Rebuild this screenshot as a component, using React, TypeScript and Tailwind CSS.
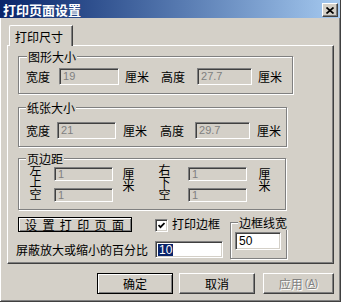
import type { ReactNode } from 'react'

// win98 bevels
const raised =
  'border-t border-l border-r border-b border-t-white border-l-white border-r-[#404040] border-b-[#404040] shadow-[inset_-1px_-1px_0_#808080]'
const defaultBtn = 'border border-black shadow-[inset_1px_1px_0_#fff,inset_-1px_-1px_0_#808080]'
const sunken =
  'border border-t-[#808080] border-l-[#808080] border-r-white border-b-white shadow-[inset_1px_1px_0_#404040,inset_-1px_-1px_0_#d4d0c8]'

function Group({ label, className, labelClass, children }: { label: string; className: string; labelClass: string; children?: ReactNode }) {
  return (
    <div className={`relative border border-[#808080] shadow-[inset_1px_1px_0_#fff,1px_1px_0_#fff] ${className}`}>
      <span className={`absolute -top-[7px] px-[1px] whitespace-nowrap leading-[14px] bg-[#d4d0c8] ${labelClass}`}>{label}</span>
      {children}
    </div>
  )
}

function Field({ value, className, enabled }: { value: string; className: string; enabled?: boolean }) {
  return (
    <div
      className={`flex items-center pl-[3px] font-['Liberation_Sans',sans-serif] text-[11px] leading-[11px] ${sunken} ${
        enabled ? 'bg-white text-black' : 'bg-[#d4d0c8] text-[#808080]'
      } ${className}`}
    >
      {value}
    </div>
  )
}

// stacked label, one glyph under the other
function Vertical({ text, className }: { text: string; className: string }) {
  return <div className={`w-[12px] leading-[12px] [writing-mode:vertical-rl] ${className}`}>{text}</div>
}

export default function App() {
  return (
    <div className="w-[341px] h-[302px] overflow-hidden bg-[#d4d0c8] border-r border-b border-r-[#404040] border-b-[#404040] shadow-[inset_1px_0_0_#fff,inset_-1px_-1px_0_#808080] text-[12px] leading-[12px] text-black font-['Noto_Sans_CJK_SC',sans-serif]">
      {/* Title bar */}
      <div className="h-[18px] flex items-start justify-between pl-[3px] pr-[2px] bg-linear-to-r from-[#0a246a] to-[#a6caf0]">
        <span className="mt-[3px] text-white font-bold text-[13px] leading-[13px]">打印页面设置</span>
        <div className={`mt-[3px] w-[16px] h-[14px] flex items-center justify-center bg-[#d4d0c8] ${raised}`}>
          <svg width="8" height="7" viewBox="0 0 8 7">
            <path d="M0.5 0.5 L7.5 6.5 M7.5 0.5 L0.5 6.5" stroke="#000" strokeWidth="1.7" fill="none" />
          </svg>
        </div>
      </div>

      <div className="pl-[7px] pt-[7px]">
        {/* Tab */}
        <div className="relative z-10 ml-[2px] -mb-[1px] w-[64px] h-[21px] bg-[#d4d0c8] border-t border-l border-r border-t-white border-l-white border-r-[#404040] shadow-[inset_-1px_0_0_#808080] rounded-tl-[2px] pl-[5px] pt-[5px]">
          打印尺寸
        </div>

        {/* Tab page */}
        <div className="w-[327px] h-[219px] border-t border-l border-r border-b border-t-white border-l-white border-r-[#404040] border-b-[#404040] shadow-[inset_-1px_-1px_0_#808080] pl-[8px]">
          <Group label="图形大小" labelClass="left-[8px]" className="ml-[2px] mt-[10px] w-[275px] h-[38px] pt-[11px] pl-[7px]">
            <div className="flex items-center h-[17px]">
              <span>宽度</span>
              <Field value="19" className="ml-[9px] w-[60px] h-[17px]" />
              <span className="ml-[6px]">厘米</span>
              <span className="ml-[12px]">高度</span>
              <Field value="27.7" className="ml-[12px] w-[55px] h-[17px]" />
              <span className="ml-[6px]">厘米</span>
            </div>
          </Group>

          <Group label="纸张大小" labelClass="left-[7px]" className="ml-[2px] mt-[13px] w-[269px] h-[40px] pt-[14px] pl-[7px]">
            <div className="flex items-center h-[17px]">
              <span>宽度</span>
              <Field value="21" className="ml-[7px] w-[59px] h-[17px]" />
              <span className="ml-[7px]">厘米</span>
              <span className="ml-[13px]">高度</span>
              <Field value="29.7" className="ml-[11px] w-[55px] h-[17px]" />
              <span className="ml-[7px]">厘米</span>
            </div>
          </Group>

          <Group label="页边距" labelClass="left-[7px]" className="ml-[2px] mt-[11px] w-[268px] h-[52px] pt-[5px] pl-[10px]">
            <div className="flex items-start">
              <Vertical text="左上空" className="" />
              <div className="ml-[13px] mt-[3px] flex flex-col gap-[7px]">
                <Field value="1" className="w-[59px] h-[14px]" />
                <Field value="1" className="w-[59px] h-[14px]" />
              </div>
              <Vertical text="厘米" className="ml-[9px] mt-[4px]" />
              <Vertical text="右下空" className="ml-[24px]" />
              <div className="ml-[18px] mt-[3px] flex flex-col gap-[7px]">
                <Field value="1" className="w-[59px] h-[14px]" />
                <Field value="1" className="w-[59px] h-[14px]" />
              </div>
              <Vertical text="厘米" className="ml-[11px] mt-[4px]" />
            </div>
          </Group>

          <div className="mt-[7px] flex items-start">
            <div className="flex flex-col">
              <div className="flex items-start">
                <div className={`ml-[2px] w-[114px] h-[15px] flex items-center pl-[6px] tracking-[5.4px] ${defaultBtn}`}>
                  设置打印页面
                </div>
                <div className={`ml-[23px] mt-[2px] w-[13px] h-[13px] bg-white flex items-center justify-center ${sunken}`}>
                  <svg width="7" height="7" viewBox="0 0 7 7">
                    <polyline points="0.5,3 2.5,5.2 6.5,1" stroke="#000" strokeWidth="1.8" fill="none" />
                  </svg>
                </div>
                <span className="ml-[4px] mt-[1px]">打印边框</span>
              </div>
              <div className="mt-[9px] flex items-center">
                <span>屏蔽放大或缩小的百分比</span>
                <div className={`ml-[7px] w-[68px] h-[17px] bg-white flex items-center pl-[2px] ${sunken}`}>
                  <span className="bg-[#0a246a] text-white px-[1px] font-['Liberation_Sans',sans-serif] text-[12px] leading-[12px]">10</span>
                </div>
              </div>
            </div>
            <Group label="边框线宽" labelClass="left-[7px]" className="ml-[7px] mt-[5px] w-[57px] h-[37px] pl-[4px] pt-[9px]">
              <Field value="50" enabled className="w-[46px] h-[18px] text-[12px]" />
            </Group>
          </div>
        </div>
      </div>

      {/* Buttons */}
      <div className="mt-[9px] flex">
        <div className={`ml-[97px] w-[76px] h-[21px] flex items-center justify-center ${defaultBtn}`}>确定</div>
        <div className={`ml-[6px] w-[76px] h-[21px] flex items-center justify-center ${raised}`}>取消</div>
        <div className={`ml-[8px] w-[71px] h-[21px] flex items-center justify-center text-[#808080] [text-shadow:1px_1px_0_#fff] ${raised}`}>
          应用
          <span className="ml-[2px] font-['Liberation_Sans',sans-serif] text-[10px]">
            (<span className="underline">A</span>)
          </span>
        </div>
      </div>
    </div>
  )
}
